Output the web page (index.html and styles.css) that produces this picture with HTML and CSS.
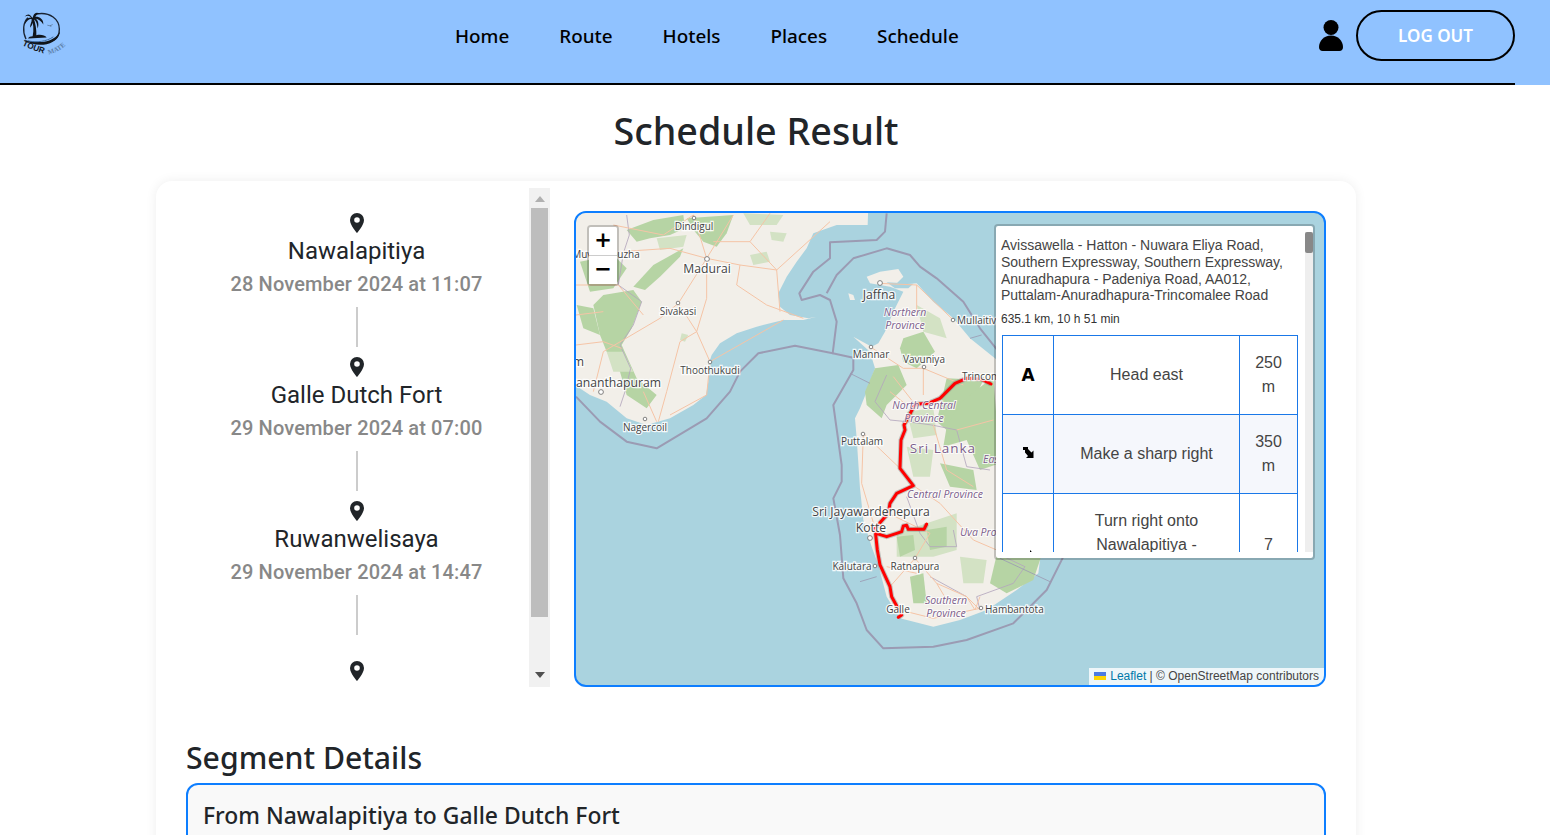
FILE: index.html
```html
<!DOCTYPE html>
<html lang="en">
<head>
    <meta charset="UTF-8">
    <title>Schedule Result</title>
    <link rel="stylesheet" href="styles.css">
</head>
<body>
    <header class="topbar">
        <div class="topbar-inner">
            <svg class="logo" viewBox="60 25 150 140">
                <path class="logo-ring" d="M112 36C150 30 178 52 178 82C178 100 170 110 160 116"/>
                <path class="logo-ring" d="M84 48C70 60 66 88 78 112"/>
                <path class="logo-fill" d="M98 103C102 85 100 65 95 48L100 47C107 65 110 85 109 100C122 97 135 100 140 107L84 110C86 105 92 103 98 103Z"/>
                <path class="logo-fill" d="M98 50C90 36 84 34 74 44C84 40 90 42 93 48C84 46 76 52 74 68C82 54 90 50 95 52C96 60 90 66 90 78C98 68 101 58 101 52C109 58 111 64 113 80C118 66 114 54 106 50C116 52 124 58 130 68C131 52 118 44 106 45C110 38 114 36 120 36C108 28 100 34 98 50Z"/>
                <path class="logo-wave" d="M72 114C110 124 150 124 172 100C180 92 182 84 178 76C186 100 168 120 140 127C118 132 90 128 72 114Z"/>
                <path class="logo-swell" d="M84 117C110 123 140 119 160 105"/>
                <path class="logo-bird" d="M142 70L150 72L158 68M150 72L154 74"/>
                <path id="logo-arc-a" class="logo-guide" d="M66 130C88 140 112 150 142 158"/>
                <path id="logo-arc-b" class="logo-guide" d="M146 158C170 152 190 140 206 122"/>
                <text class="logo-tour"><textPath href="#logo-arc-a">TOUR</textPath></text>
                <text class="logo-mate"><textPath href="#logo-arc-b">MATE</textPath></text>
            </svg>
            <nav class="menu">
                <a href="#">Home</a>
                <a href="#">Route</a>
                <a href="#">Hotels</a>
                <a href="#">Places</a>
                <a href="#">Schedule</a>
            </nav>
            <div class="account">
                <svg class="user-icon" viewBox="0 0 24 31">
                    <circle cx="12" cy="7.5" r="7.5"/>
                    <path d="M0 27C0 21 5 15.500 12 15.500S24 21 24 27C24 29.500 22.500 31 20.500 31H3.500C1.500 31 0 29.500 0 27Z"/>
                </svg>
                <button type="button" class="logout">LOG OUT</button>
            </div>
        </div>
    </header>

    <main class="page">
        <h1 class="page-title">Schedule Result</h1>
        <section class="card">
            <div class="top-row">
                <div class="stops">
                    <div class="stops-list">
                        <div class="stop">
                            <svg class="pin" viewBox="0 0 14 20"><path fill-rule="evenodd" d="M7 20C7 20 14 12.500 14 7A7 7 0 0 0 0 7C0 12.500 7 20 7 20ZM7 9.800A2.800 2.800 0 1 1 7 4.200A2.800 2.800 0 0 1 7 9.800Z"/></svg>
                            <div class="stop-name">Nawalapitiya</div>
                            <div class="stop-date">28 November 2024 at 11:07</div>
                            <div class="stop-line"></div>
                        </div>
                        <div class="stop">
                            <svg class="pin" viewBox="0 0 14 20"><path fill-rule="evenodd" d="M7 20C7 20 14 12.500 14 7A7 7 0 0 0 0 7C0 12.500 7 20 7 20ZM7 9.800A2.800 2.800 0 1 1 7 4.200A2.800 2.800 0 0 1 7 9.800Z"/></svg>
                            <div class="stop-name">Galle Dutch Fort</div>
                            <div class="stop-date">29 November 2024 at 07:00</div>
                            <div class="stop-line"></div>
                        </div>
                        <div class="stop">
                            <svg class="pin" viewBox="0 0 14 20"><path fill-rule="evenodd" d="M7 20C7 20 14 12.500 14 7A7 7 0 0 0 0 7C0 12.500 7 20 7 20ZM7 9.800A2.800 2.800 0 1 1 7 4.200A2.800 2.800 0 0 1 7 9.800Z"/></svg>
                            <div class="stop-name">Ruwanwelisaya</div>
                            <div class="stop-date">29 November 2024 at 14:47</div>
                            <div class="stop-line"></div>
                        </div>
                        <div class="stop stop-last">
                            <svg class="pin" viewBox="0 0 14 20"><path fill-rule="evenodd" d="M7 20C7 20 14 12.500 14 7A7 7 0 0 0 0 7C0 12.500 7 20 7 20ZM7 9.800A2.800 2.800 0 1 1 7 4.200A2.800 2.800 0 0 1 7 9.800Z"/></svg>
                        </div>
                    </div>
                    <div class="stops-bar">
                        <span class="bar-up"></span>
                        <span class="bar-thumb"></span>
                        <span class="bar-down"></span>
                    </div>
                </div>

                <div class="map">
                    <svg class="map-art" viewBox="576 213 748 472">
                        <g transform="translate(570 205) scale(.33333)">
                            <!-- India -->
                            <path class="land" d="M0 0H895L893 60L800 60L730 85L710 130L680 170L650 215L625 265L630 305L660 330L715 340L740 335L700 345L640 345L560 365L500 385L450 415L425 450L415 480L415 530L408 570L370 600L300 640L230 660L170 640L110 590L60 570L0 530Z"/>
                            <path class="green" d="M100 270L190 255L215 290L185 370L155 420L200 520L260 570L230 610L170 570L150 500L110 440L90 390L70 300Z"/>
                            <path class="green" d="M190 245L250 180L340 130L330 155L270 215L225 255Z"/>
                            <path class="green" d="M170 75L250 45L340 30L345 70L300 90L240 100L200 110Z"/>
                            <path class="green" d="M350 40L490 30L470 85L440 125L400 110L375 80Z"/>
                            <path class="green" d="M20 300L70 310L90 390L40 370Z"/>
                            <path class="green" d="M30 170L130 150L170 190L130 250L60 260Z"/>
                            <path class="green-lt" d="M110 440L160 440L190 500L130 500Z"/>
                            <path class="green-lt" d="M540 150L590 140L600 170L550 180Z"/>
                            <path class="green-lt" d="M520 25L640 30L620 60L540 60Z"/>
                            <path class="green-lt" d="M600 80L650 85L640 110L605 105Z"/>
                            <path class="green-lt" d="M260 100L350 90L340 125L270 135Z"/>
                            <path class="green-lt" d="M335 385L355 390L345 410L330 405Z"/>
                            <path class="border" d="M170 30L178 90L160 145L145 240L215 290L190 360L150 420L182 490L165 560L150 605"/>
                            <path class="road" d="M410 160L490 30M410 160L370 30M410 160L300 130L150 140L18 155M410 160L510 180L620 195L780 50M510 180L500 240L590 300L700 340M620 195L630 320M410 160L410 280L380 380L420 470M410 160L325 295L270 340L100 440M18 420L100 410L155 430M380 380L330 410L290 560L265 650M420 470L410 570L300 630M325 295L380 380M420 470L640 345M18 240L145 240L220 330M100 440L70 560M430 110L540 110L620 195M600 25L540 110M130 60L280 90L370 30M18 330L100 320M220 560L260 650"/>
                            <!-- Sri Lanka -->
                            <path class="land" d="M890 215L930 200L985 192L1000 215L975 240L1040 235L1090 290L1150 340L1200 400L1300 480V1050L1410 1065L1405 1105L1340 1155L1250 1215L1170 1245L1090 1265L990 1240L950 1175L925 1080L905 1025L880 945L870 850L860 700L855 640L870 610L890 560L915 490L900 440L850 395L905 425L925 415L945 380L970 320L1000 260L960 245L900 235Z"/>
                            <path class="sea" d="M950 232L1030 236L1015 250L975 250Z"/>
                            <path class="land" d="M835 265L850 270L855 285L840 285Z"/>
                            <path class="green" d="M915 490L985 480L1010 540L950 600L935 640L890 600L885 560Z"/>
                            <path class="green" d="M1000 400L1060 380L1095 440L1040 490L1000 470L990 430Z"/>
                            <path class="green" d="M1130 520L1240 525L1160 700L1100 650Z"/>
                            <path class="green-lt" d="M1040 300L1110 340L1130 400L1060 380Z"/>
                            <path class="green-lt" d="M1010 620L1090 610L1100 690L1030 700Z"/>
                            <g transform="translate(690 495)">
                                <path class="green" d="M440 170L480 100L580 20L600 280L540 300L500 210L430 230Z"/>
                                <path class="green" d="M420 280L520 300L530 360L450 350Z"/>
                                <path class="green-lt" d="M290 490L470 430L470 540L400 560L290 560Z"/>
                                <path class="green" d="M290 500L340 495L345 540L300 560Z"/>
                                <path class="green" d="M380 480L440 470L440 530L390 540Z"/>
                                <path class="green" d="M330 620L370 610L380 700L340 700Z"/>
                                <path class="green" d="M590 555L725 555L700 630L620 670L570 640Z"/>
                                <path class="green-lt" d="M480 560L560 570L550 640L490 640Z"/>
                                <path class="green-lt" d="M320 230L400 240L390 320L340 320Z"/>
                                <path class="border" d="M260 15L225 95L270 150L320 155L395 165L470 180L500 290L570 300M320 380L360 490L390 530L470 530L460 480M590 550L675 590L640 640L530 680L540 720M390 620L500 680"/>
                                <path class="road" d="M190 190L300 295M190 190L185 340L225 475M340 347L420 400L520 510L590 540M265 430L390 490L345 565L270 650M345 565L410 640L500 680L540 720M300 720L400 745L540 715M410 640L440 690M400 165L440 300L520 350M470 180L580 150M280 20L345 103M500 680L525 720L540 680M260 590L350 610"/>
                            </g>
                            <path class="road" d="M900 425L1000 490L1060 490L1060 570M1060 490L1180 540M925 235L1040 240L1150 345M1040 240L1040 330M960 560L1010 600"/>
                            <!-- maritime boundaries -->
                            <path class="sea-border" d="M950 25L945 80L920 105L780 112L780 160L730 200L688 265L695 285L750 270L780 285L800 350L788 445L675 422L565 445L510 500L480 560L410 640L260 730L170 710L90 650L18 575"/>
                            <path class="sea-border" d="M770 265L800 210L850 160L950 130L1020 150L1050 185L1100 220L1180 290L1230 370L1290 445"/>
                            <path class="sea-border" d="M788 445L850 458L850 495L790 600L815 780L815 830L790 880L810 990L820 1120L860 1195L890 1275L940 1330L1090 1325L1190 1305L1330 1255L1430 1155L1480 1055"/>
                            <path class="sea-thin" d="M840 505L900 535M1200 400L1235 390M1290 1060L1440 1130M870 1130L920 1115"/>
                            <!-- route -->
                            <g transform="translate(690 495)">
                                <path class="route-case" d="M573 42L545 28L500 25L465 40L420 85L385 100L345 103L312 165L315 180L303 210L300 295L340 347L290 370L270 400L265 430L225 475L232 540L240 585L270 650L275 680L305 735L295 742M228 490L260 500L290 490L305 485L310 468L320 466L325 478L372 478L380 462"/>
                                <path class="route" d="M573 42L545 28L500 25L465 40L420 85L385 100L345 103L312 165L315 180L303 210L300 295L340 347L290 370L270 400L265 430L225 475L232 540L240 585L270 650L275 680L305 735L295 742M228 490L260 500L290 490L305 485L310 468L320 466L325 478L372 478L380 462"/>
                            </g>
                        </g>
                        <!-- town dots -->
                        <circle class="town" cx="694" cy="218" r="1.800"/>
                        <circle class="town" cx="707" cy="259" r="2.400"/>
                        <circle class="town" cx="678" cy="303" r="1.800"/>
                        <circle class="town" cx="710" cy="362" r="1.800"/>
                        <circle class="town" cx="601" cy="392" r="2.400"/>
                        <circle class="town" cx="645" cy="419" r="1.800"/>
                        <circle class="town" cx="880" cy="283" r="2.400"/>
                        <circle class="town" cx="953" cy="320" r="1.800"/>
                        <circle class="town" cx="871" cy="347" r="1.800"/>
                        <circle class="town" cx="924" cy="367" r="1.800"/>
                        <circle class="town" cx="863" cy="434" r="1.800"/>
                        <circle class="town" cx="870" cy="538" r="2.400"/>
                        <circle class="town" cx="875" cy="566" r="1.800"/>
                        <circle class="town" cx="915" cy="558" r="1.800"/>
                        <circle class="town" cx="981" cy="608" r="1.800"/>
                        <!-- labels -->
                        <text class="lbl" x="694" y="230">Dindigul</text>
                        <text class="lbl" x="606" y="258">Muvattupuzha</text>
                        <text class="lbl lbl-big" x="707" y="273">Madurai</text>
                        <text class="lbl" x="678" y="315">Sivakasi</text>
                        <text class="lbl" x="710" y="374">Thoothukudi</text>
                        <text class="lbl lbl-big lbl-end" x="584" y="366">Kollam</text>
                        <text class="lbl lbl-big lbl-end" x="661" y="387">Thiruvananthapuram</text>
                        <text class="lbl" x="645" y="431">Nagercoil</text>
                        <text class="lbl lbl-big" x="879" y="299">Jaffna</text>
                        <text class="lbl" x="871" y="358">Mannar</text>
                        <text class="lbl" x="924" y="363">Vavuniya</text>
                        <text class="lbl lbl-start" x="957" y="324">Mullaitivu</text>
                        <text class="lbl lbl-start" x="962" y="380">Trincomalee</text>
                        <text class="lbl" x="862" y="445">Puttalam</text>
                        <text class="lbl lbl-big" x="871" y="516">Sri Jayawardenepura</text>
                        <text class="lbl lbl-big" x="871" y="532">Kotte</text>
                        <text class="lbl" x="852" y="570">Kalutara</text>
                        <text class="lbl" x="915" y="570">Ratnapura</text>
                        <text class="lbl" x="898" y="613">Galle</text>
                        <text class="lbl lbl-start" x="985" y="613">Hambantota</text>
                        <text class="prov" x="905" y="316">Northern</text>
                        <text class="prov" x="905" y="329">Province</text>
                        <text class="prov" x="924" y="409">North Central</text>
                        <text class="prov" x="924" y="422">Province</text>
                        <text class="prov prov-country" x="943" y="453">Sri Lanka</text>
                        <text class="prov" x="945" y="498">Central Province</text>
                        <text class="prov prov-start" x="960" y="536">Uva Province</text>
                        <text class="prov prov-start" x="983" y="463">Eastern Province</text>
                        <text class="prov" x="946" y="604">Southern</text>
                        <text class="prov" x="946" y="617">Province</text>
                    </svg>

                    <div class="zoom-ctl">
                        <a href="#" class="zoom-in">+</a>
                        <a href="#">&#8722;</a>
                    </div>

                    <div class="route-box">
                        <div class="route-scroll">
                            <h2 class="route-roads">Avissawella - Hatton - Nuwara Eliya Road, Southern Expressway, Southern Expressway, Anuradhapura - Padeniya Road, AA012, Puttalam-Anuradhapura-Trincomalee Road</h2>
                            <h3 class="route-total">635.1 km, 10 h 51 min</h3>
                            <table class="route-steps">
                                <colgroup><col class="col-icon"><col class="col-text"><col class="col-dist"></colgroup>
                                <tr>
                                    <td class="step-letter">A</td>
                                    <td>Head east</td>
                                    <td>250 m</td>
                                </tr>
                                <tr class="step-alt">
                                    <td>
                                        <svg class="step-icon" viewBox="0 0 12 11"><path d="M0 0H5V2L8.500 5.500L10.500 3.500V11H3L5 9L2 5.500V3H0Z"/></svg>
                                    </td>
                                    <td>Make a sharp right</td>
                                    <td>350 m</td>
                                </tr>
                                <tr>
                                    <td>
                                        <svg class="step-icon step-icon-turn" viewBox="0 0 12 14"><path d="M7 0L8.500 1.500V4H2V10H0V2H7Z"/></svg>
                                    </td>
                                    <td>Turn right onto Nawalapitiya - Gampola Hatton Colombo Road</td>
                                    <td>7 km</td>
                                </tr>
                            </table>
                        </div>
                        <div class="route-bar"><span></span></div>
                    </div>

                    <div class="attribution">
                        <svg class="flag" viewBox="0 0 12 8"><rect width="12" height="4" fill="#4C7BE1"/><rect y="4" width="12" height="4" fill="#FFD500"/></svg>
                        <a href="#">Leaflet</a> | &copy; OpenStreetMap contributors
                    </div>
                </div>
            </div>

            <h2 class="segment-title">Segment Details</h2>
            <div class="segment">
                <h3>From Nawalapitiya to Galle Dutch Fort</h3>
            </div>
        </section>
    </main>
</body>
</html>
```

FILE: styles.css
```css
html, body {
    height: 835px;
    overflow: hidden;
}
body {
    margin: 0;
    background: white;
    color: #212529;
    font-family: "Noto Sans", "Open Sans", sans-serif;
}

/* header */
.topbar {
    background: #90c2ff;
}
.topbar-inner {
    width: 1515px;
    height: 72px;
    padding-bottom: 11px;
    border-bottom: 2px solid black;
    display: flex;
    align-items: center;
}
.logo {
    width: 50px;
    height: 47px;
    margin: -5px 0 0 20px;
    flex: none;
}
.logo-ring {
    fill: none;
    stroke: #1a2433;
    stroke-width: 4;
}
.logo-fill {
    fill: #10151c;
}
.logo-wave {
    fill: #10151c;
}
.logo-swell {
    fill: none;
    stroke: #3f6ea8;
    stroke-width: 3;
}
.logo-bird {
    fill: none;
    stroke: #3c4a5c;
    stroke-width: 1.500;
}
.logo-guide {
    fill: none;
}
.logo-tour {
    font: bold 25px "Liberation Sans", sans-serif;
    fill: #10151c;
}
.logo-mate {
    font: bold 20px "Liberation Serif", serif;
    fill: #5d7fa8;
}
.menu {
    display: flex;
    gap: 50px;
    margin-left: 385px;
}
.menu a {
    color: black;
    text-decoration: none;
    font-size: 18.850px;
    font-weight: 500;
}
.account {
    display: flex;
    align-items: center;
    gap: 13px;
    margin: -1px 0 0 auto;
}
.user-icon {
    width: 24px;
    height: 31px;
}
.logout {
    width: 159px;
    height: 51px;
    border: 2px solid black;
    border-radius: 26px;
    background: transparent;
    color: white;
    font-family: inherit;
    font-size: 17px;
    font-weight: 600;
    padding: 0;
}

/* page */
.page {
    width: 1512px;
}
.page-title {
    margin: 0;
    height: 96px;
    line-height: 92px;
    text-align: center;
    font-size: 37.700px;
    font-weight: 500;
}
.card {
    width: 1140px;
    margin-left: 156px;
    padding: 7px 30px 40px;
    border-radius: 16px;
    background: white;
    box-shadow: 0 0 12px rgba(0, 0, 0, .07);
}
.top-row {
    display: flex;
    align-items: flex-end;
    gap: 24px;
}

/* stops list */
.stops {
    width: 364px;
    height: 499px;
    display: flex;
    flex: none;
}
.stops-list {
    flex: 1;
    overflow: hidden;
    padding: 25px 2px 0 0;
    text-align: center;
    font-family: Roboto, sans-serif;
}
.stop-last {
    margin-top: 26px;
}
.pin {
    display: block;
    width: 14px;
    height: 20px;
    margin: 0 auto;
    fill: #212529;
}
.stop-name {
    font-size: 24px;
    line-height: 36px;
}
.stop-date {
    font-size: 20px;
    line-height: 30px;
    font-weight: 500;
    letter-spacing: .14px;
    color: #888;
}
.stop-line {
    width: 2px;
    height: 40px;
    margin: 8px auto 10px;
    background: #ccc;
}
.stops-bar {
    width: 21px;
    background: #f1f1f1;
    display: flex;
    flex-direction: column;
    align-items: center;
}
.bar-up {
    margin-top: 8px;
    border: 5px solid transparent;
    border-top: 0;
    border-bottom: 6px solid #b0b0b0;
}
.bar-thumb {
    width: 17px;
    height: 409px;
    margin-top: 6px;
    background: #bdbdbd;
}
.bar-down {
    margin-top: 55px;
    border: 5px solid transparent;
    border-bottom: 0;
    border-top: 6px solid #505050;
}

/* map */
.map {
    position: relative;
    width: 748px;
    height: 472px;
    flex: none;
    border: 2px solid #0d7eff;
    border-radius: 12px;
    overflow: hidden;
    background: #aad3df;
}
.map-art {
    display: block;
    width: 748px;
    height: 472px;
}
.land {
    fill: #f2efe9;
}
.sea {
    fill: #aad3df;
}
.green {
    fill: #b6d4a4;
    filter: blur(1px);
}
.green-lt {
    fill: #d3e2c4;
    filter: blur(1px);
}
.road {
    fill: none;
    stroke: #f5c4a6;
    stroke-width: 3;
}
.border {
    fill: none;
    stroke: #b3a6bd;
    stroke-width: 2.500;
}
.sea-border {
    fill: none;
    stroke: #9b9bb3;
    stroke-width: 6;
    stroke-linejoin: round;
}
.sea-thin {
    fill: none;
    stroke: #9b9bb3;
    stroke-width: 2.500;
}
.route-case {
    fill: none;
    stroke: rgba(120, 120, 120, .4);
    stroke-width: 15;
    stroke-linejoin: round;
}
.route {
    fill: none;
    stroke: #f00;
    stroke-width: 9;
    stroke-linejoin: round;
    stroke-linecap: round;
}
.town {
    fill: white;
    stroke: #666;
    stroke-width: .8;
}
.lbl {
    font: 10px "Open Sans", sans-serif;
    fill: #444;
    stroke: rgba(255, 255, 255, .85);
    stroke-width: 2.500px;
    paint-order: stroke;
    text-anchor: middle;
}
.lbl-big {
    font-size: 12.200px;
}
.lbl-end {
    text-anchor: end;
}
.lbl-start {
    text-anchor: start;
}
.prov {
    font: italic 10.500px "Open Sans", sans-serif;
    fill: #7d5f8c;
    stroke: rgba(255, 255, 255, .8);
    stroke-width: 2px;
    paint-order: stroke;
    text-anchor: middle;
}
.prov-start {
    text-anchor: start;
}
.prov-country {
    font-size: 13.500px;
    font-style: normal;
    letter-spacing: 1px;
}
.zoom-ctl {
    position: absolute;
    left: 11px;
    top: 12px;
    width: 28px;
    border: 2px solid rgba(0, 0, 0, .2);
    border-radius: 4px;
    background-clip: padding-box;
}
.zoom-ctl a {
    display: block;
    height: 28px;
    background: white;
    color: black;
    text-align: center;
    text-decoration: none;
    font: bold 21px/27px "DejaVu Sans", sans-serif;
}
.zoom-ctl .zoom-in {
    border-bottom: 1px solid #ccc;
    border-radius: 2px 2px 0 0;
}
.route-box {
    position: absolute;
    left: 418px;
    top: 11px;
    width: 312px;
    height: 320px;
    padding: 6px 0 6px 5px;
    border: 2px solid rgba(0, 0, 0, .2);
    border-radius: 4px;
    background: white;
    background-clip: padding-box;
    display: flex;
    font-family: "Liberation Sans", Arial, sans-serif;
    color: #444;
}
.route-scroll {
    flex: 1;
    overflow: hidden;
}
.route-bar {
    width: 8px;
    background: #eee;
}
.route-bar span {
    display: block;
    height: 21px;
    background: #888;
    border-radius: 2px;
}
.route-roads {
    margin: 5px 0 0;
    font-size: 14px;
    line-height: 16.800px;
    font-weight: normal;
    width: 295px;
}
.route-total {
    margin: 8px 0 0;
    font-size: 12px;
    line-height: 15px;
    font-weight: normal;
    color: #333;
}
.route-steps {
    margin: 8px 0 0 1px;
    width: 296px;
    table-layout: fixed;
    border-collapse: collapse;
    font-size: 16px;
    line-height: 24px;
    color: #444;
}
.route-steps td {
    border: 1px solid #1a78e8;
    padding: 15px 12px;
    text-align: center;
}
.col-icon {
    width: 51px;
}
.col-dist {
    width: 58px;
}
.step-alt td {
    background: #f5f7fc;
}
.route-steps .step-letter {
    font: bold 17px "DejaVu Sans", sans-serif;
    color: black;
}
.step-icon {
    display: block;
    width: 12px;
    margin: -4px auto 0;
    transform: translateX(1px);
    fill: black;
}
.step-icon-turn {
    margin-top: 0;
}
.attribution {
    position: absolute;
    right: 0;
    bottom: 0;
    height: 17px;
    padding: 0 5px;
    background: rgba(255, 255, 255, .8);
    font: 12px/17px "Liberation Sans", Arial, sans-serif;
    color: #444;
}
.attribution a {
    color: #0078a8;
    text-decoration: none;
}
.flag {
    width: 12px;
    height: 8px;
    margin-right: 1px;
}

/* segments */
.segment-title {
    margin: 48px 0 0;
    font-size: 30.200px;
    line-height: 46px;
    font-weight: 500;
}
.segment {
    margin-top: 2px;
    padding: 15px 15px;
    height: 300px;
    border: 2px solid #0d7eff;
    border-radius: 12px;
    background: #f9f9f9;
}
.segment h3 {
    margin: 0;
    font-size: 22.900px;
    line-height: 32px;
    font-weight: 500;
}
```
